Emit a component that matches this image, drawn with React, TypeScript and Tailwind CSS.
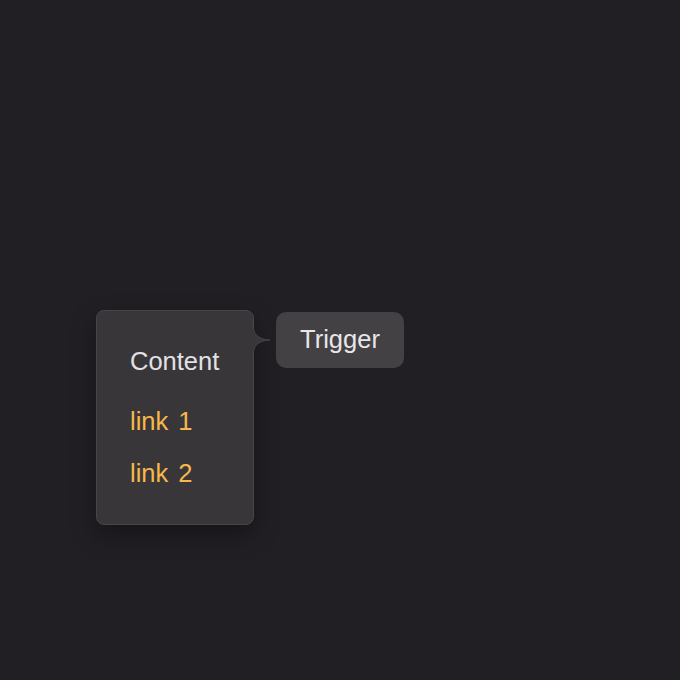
import React from "react";

export default function App() {
  return (
    <div
      className="w-[680px] h-[680px] bg-[#221f24] relative"
      style={{ fontFamily: '"Liberation Sans", Arial, sans-serif' }}
    >
      <div className="flex items-start pt-[310px] pl-[96px]">
        <div className="relative w-[158px] h-[215px] rounded-[8px] bg-[#39363a] border border-[#47444a] shadow-[0_10px_24px_rgba(0,0,0,0.35)] pl-[33px] pt-[36px] flex flex-col">
          <div className="text-[25.5px] leading-[29px] text-[#e3e1e4]">Content</div>
          <div className="mt-[31px] text-[25.5px] leading-[29px] text-[#f6b84b] [word-spacing:3px]">link 1</div>
          <div className="mt-[23px] text-[25.5px] leading-[29px] text-[#f6b84b] [word-spacing:3px]">link 2</div>
          <svg
            className="absolute left-[155px] top-[9px]"
            width="20"
            height="40"
            viewBox="0 0 20 40"
          >
            <path
              d="M0 0 C1 3 1 8 2 11 C4 17 11 20 18 20 C11 20 4 23 2 29 C1 32 1 37 0 40 Z"
              fill="#39363a"
            />
            <path
              d="M1 0 C1 3 1 8 2 11 C4 17 11 20 18 20 C11 20 4 23 2 29 C1 32 1 37 1 40"
              fill="none"
              stroke="#47444a"
              strokeWidth="1"
            />
          </svg>
        </div>
        <div className="ml-[22px] mt-[2px] h-[56px] w-[128px] justify-center rounded-[10px] bg-[#444145] flex items-center text-[25.5px] leading-[29px] pb-[2px] text-[#e8e6e9]">
          Trigger
        </div>
      </div>
    </div>
  );
}
